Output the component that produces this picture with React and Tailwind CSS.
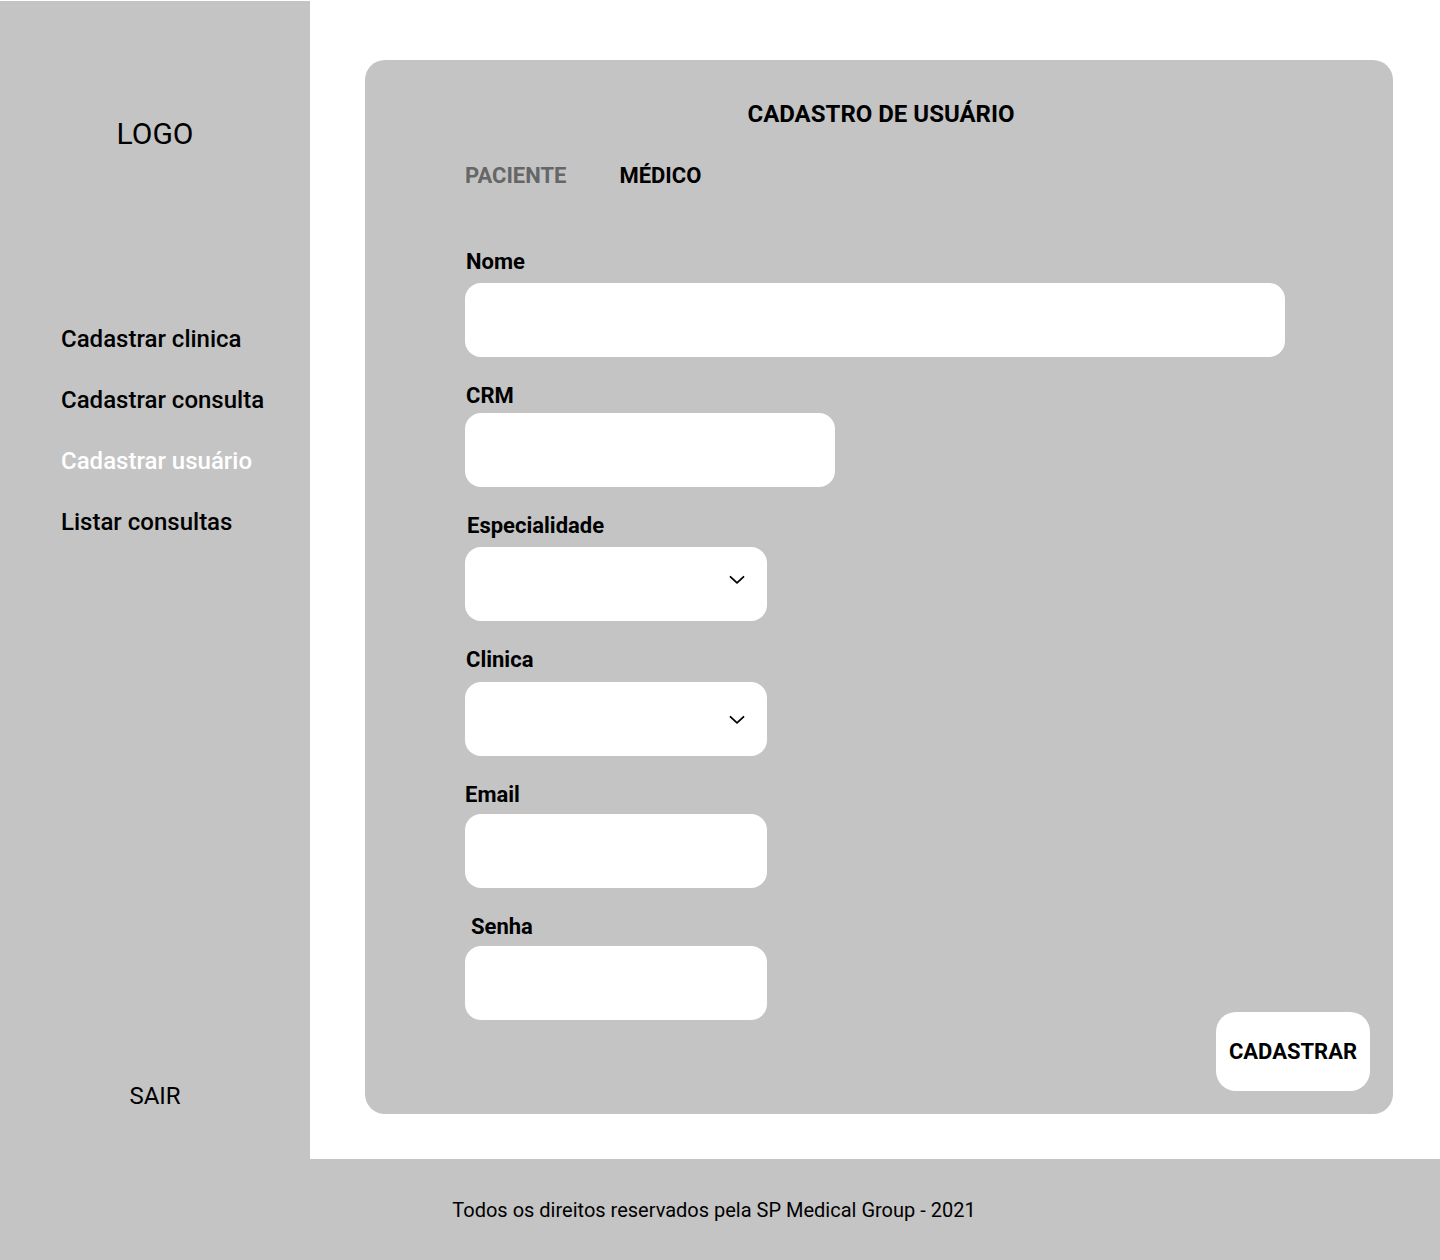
import { useState } from "react";

const menu = [
  { label: "Cadastrar clinica", active: false },
  { label: "Cadastrar consulta", active: false },
  { label: "Cadastrar usuário", active: true },
  { label: "Listar consultas", active: false },
];

function Chevron({ className = "" }) {
  return (
    <svg width="16" height="10" viewBox="0 0 16 10" fill="none" className={"mr-[22px] " + className}>
      <path d="M1.5 1.8 8 7.8l6.5-6" stroke="#000" strokeWidth="1.8" strokeLinecap="round" strokeLinejoin="round" />
    </svg>
  );
}

function Field({ label, className = "", labelClass = "", inputClass = "", select, chevronClass }) {
  return (
    <div className={className}>
      <p className={"text-[22px] font-bold leading-[24px] text-black " + labelClass}>{label}</p>
      <div className={"flex h-[74px] items-center justify-end rounded-[16px] bg-white " + inputClass}>
        {select && <Chevron className={chevronClass} />}
      </div>
    </div>
  );
}

export default function App() {
  const [tab, setTab] = useState("medico");

  return (
    <div className="flex h-[1260px] w-[1440px] flex-col bg-white font-['Roboto',sans-serif]">
      <div className="flex h-[1159px]">
        {/* SIDEBAR */}
        <aside className="mt-px flex w-[310px] flex-col bg-[#c4c4c4] pt-[115px] pb-[49px]">
          <p className="text-center text-[30px] leading-[36px] text-black">LOGO</p>

          <nav className="mt-[173px] flex flex-col gap-[33px] pl-[61px]">
            {menu.map((item) => (
              <a
                key={item.label}
                className={
                  "text-[24px] font-medium leading-[28px] " +
                  (item.active ? "text-white" : "text-black")
                }
              >
                {item.label}
              </a>
            ))}
          </nav>

          <p className="mt-auto text-center text-[24px] leading-[28px] text-black">SAIR</p>
        </aside>

        {/* MAIN */}
        <main className="flex-1 pt-[60px] pl-[55px] pr-[47px] pb-[45px]">
          <div className="flex h-full flex-col rounded-[20px] bg-[#c4c4c4] pt-[41px]">
            <h1 className="pl-[4px] text-center text-[24px] font-bold leading-[26px] text-black">
              CADASTRO DE USUÁRIO
            </h1>

            <div className="mt-[37px] flex gap-[53px] pl-[100px] text-[22px] font-bold leading-[24px]">
              <button
                onClick={() => setTab("paciente")}
                className={tab === "paciente" ? "text-black" : "text-[#666666]"}
              >
                PACIENTE
              </button>
              <button
                onClick={() => setTab("medico")}
                className={tab === "medico" ? "text-black" : "text-[#666666]"}
              >
                MÉDICO
              </button>
            </div>

            <div className="mt-[62px] flex flex-col pl-[100px] pr-[23px]">
              <Field label="Nome" labelClass="pl-px" inputClass="mt-[9px] w-[820px]" />
              <Field label="CRM" className="mt-[27px]" labelClass="pl-px" inputClass="mt-[5px] w-[370px]" />
              <Field label="Especialidade" className="mt-[27px]" labelClass="pl-[2px]" inputClass="mt-[9px] w-[302px]" select chevronClass="mb-[8px]" />
              <Field label="Clinica" className="mt-[27px]" labelClass="pl-px" inputClass="mt-[10px] w-[302px]" select chevronClass="mt-[2px]" />
              <Field label="Email" className="mt-[27px]" inputClass="mt-[7px] w-[302px]" />

              <div className="mt-[27px] flex justify-between">
                <Field label="Senha" labelClass="pl-[6px]" inputClass="mt-[7px] w-[302px]" />
                <button className="mt-[97px] h-[79px] w-[154px] rounded-[20px] bg-white text-[22px] font-bold text-black">
                  CADASTRAR
                </button>
              </div>
            </div>
          </div>
        </main>
      </div>

      {/* FOOTER */}
      <footer className="flex h-[101px] items-center justify-center bg-[#c4c4c4] pr-[12px]">
        <p className="text-[20px] leading-[24px] text-black">
          Todos os direitos reservados pela SP Medical Group - 2021
        </p>
      </footer>
    </div>
  );
}
